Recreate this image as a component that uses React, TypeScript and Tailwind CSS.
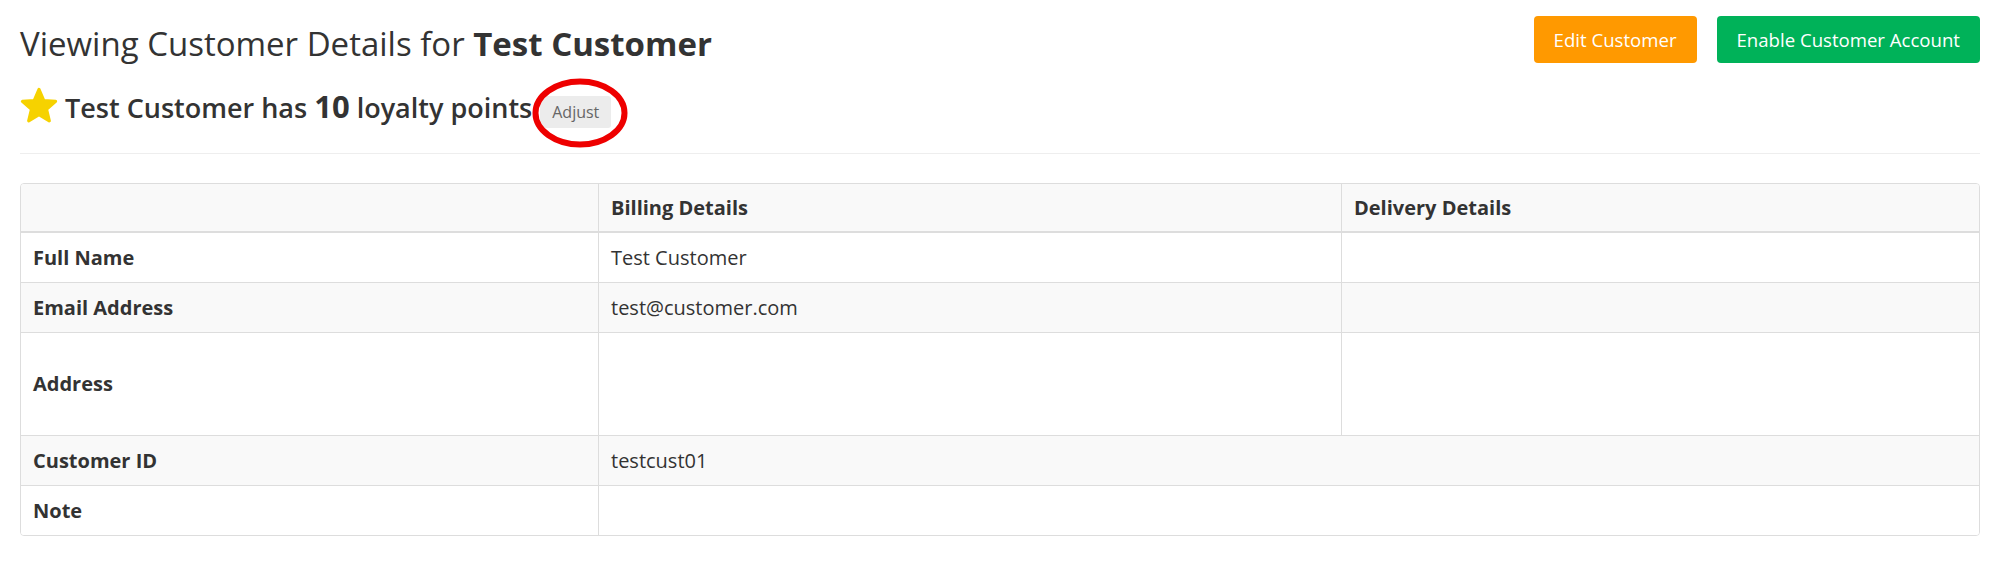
import React from "react"

const font = { fontFamily: '"Open Sans", "Noto Sans", sans-serif' }

const StarIcon = () => (
  <svg width="38" height="36" viewBox="0 0 24 23" className="mt-[-2px] shrink-0">
    <polygon
      points="12,1.5 15,8.6 22.6,9.2 16.8,14.2 18.6,21.6 12,17.6 5.4,21.6 7.2,14.2 1.4,9.2 9,8.6"
      fill="#f6d200"
      stroke="#f6d200"
      strokeWidth="2"
      strokeLinejoin="round"
    />
  </svg>
)

type Row = {
  label: string
  billing?: string
  delivery?: string
  span?: boolean
  tall?: boolean
  striped?: boolean
  last?: boolean
}

const rows: Row[] = [
  { label: "Full Name", billing: "Test Customer", delivery: "" },
  { label: "Email Address", billing: "test@customer.com", delivery: "", striped: true },
  { label: "Address", billing: "", delivery: "", tall: true },
  { label: "Customer ID", billing: "testcust01", span: true, striped: true },
  { label: "Note", billing: "", span: true, last: true },
]

const App = () => {
  return (
    <div className="min-h-[563px] bg-white px-[20px] pt-[16px] text-[#333]" style={font}>
      <div className="flex items-start justify-between">
        <div>
          <h1 className="mt-[7px] text-[33px] leading-[41px] font-normal text-[#333]">
            Viewing Customer Details for <span className="font-bold">Test Customer</span>
          </h1>
          <div className="mt-[25px] flex items-start">
            <StarIcon />
            <span className="ml-[7px] whitespace-nowrap text-[27px] leading-[35px] font-semibold text-[#333]">
              Test Customer has <span className="text-[31px] font-bold">10</span> loyalty points
            </span>
            <div className="relative ml-[8px] mt-[7px]">
              <button className="h-[32px] rounded-[3px] bg-[#ececec] px-[12px] text-[16px] text-[#666]">
                Adjust
              </button>
              <svg
                width="96"
                height="70"
                viewBox="0 0 96 70"
                className="pointer-events-none absolute left-[-8px] top-[-18px]"
              >
                <ellipse cx="48" cy="35" rx="44.5" ry="31.5" fill="none" stroke="#ee0000" strokeWidth="6" />
              </svg>
            </div>
          </div>
        </div>
        <div className="flex gap-[20px]">
          <button className="h-[47px] rounded-[4px] bg-[#ff9900] px-[20px] text-[18.6px] text-white">
            Edit Customer
          </button>
          <button className="h-[47px] rounded-[4px] bg-[#00b259] px-[20px] text-[18.6px] text-white">
            Enable Customer Account
          </button>
        </div>
      </div>

      <div className="mt-[25px] border-t border-[#eeeeee]" />

      <div className="mt-[29px] overflow-hidden rounded-[4px] border border-[#dddddd]">
        <div className="grid grid-cols-[578px_743px_1fr] bg-[#f9f9f9] text-[20px] font-bold">
          <div className="h-[49px] border-r border-b-2 border-[#dddddd]" />
          <div className="flex h-[49px] items-center border-r border-b-2 border-[#dddddd] px-[12px]">
            Billing Details
          </div>
          <div className="flex h-[49px] items-center border-b-2 border-[#dddddd] px-[12px]">
            Delivery Details
          </div>
        </div>
        {rows.map((r) => {
          const h = r.tall ? "h-[103px]" : r.last ? "h-[49px]" : "h-[50px]"
          const bottom = r.last ? "" : "border-b"
          return (
            <div
              key={r.label}
              className={`grid grid-cols-[578px_743px_1fr] text-[20px] ${r.striped ? "bg-[#f9f9f9]" : "bg-white"}`}
            >
              <div className={`flex ${h} items-center border-r ${bottom} border-[#dddddd] px-[12px] font-bold`}>
                {r.label}
              </div>
              {r.span ? (
                <div className={`col-span-2 flex ${h} items-center ${bottom} border-[#dddddd] px-[12px]`}>
                  {r.billing}
                </div>
              ) : (
                <>
                  <div className={`flex ${h} items-center border-r ${bottom} border-[#dddddd] px-[12px]`}>
                    {r.billing}
                  </div>
                  <div className={`flex ${h} items-center ${bottom} border-[#dddddd] px-[12px]`}>
                    {r.delivery}
                  </div>
                </>
              )}
            </div>
          )
        })}
      </div>
    </div>
  )
}

export default App
